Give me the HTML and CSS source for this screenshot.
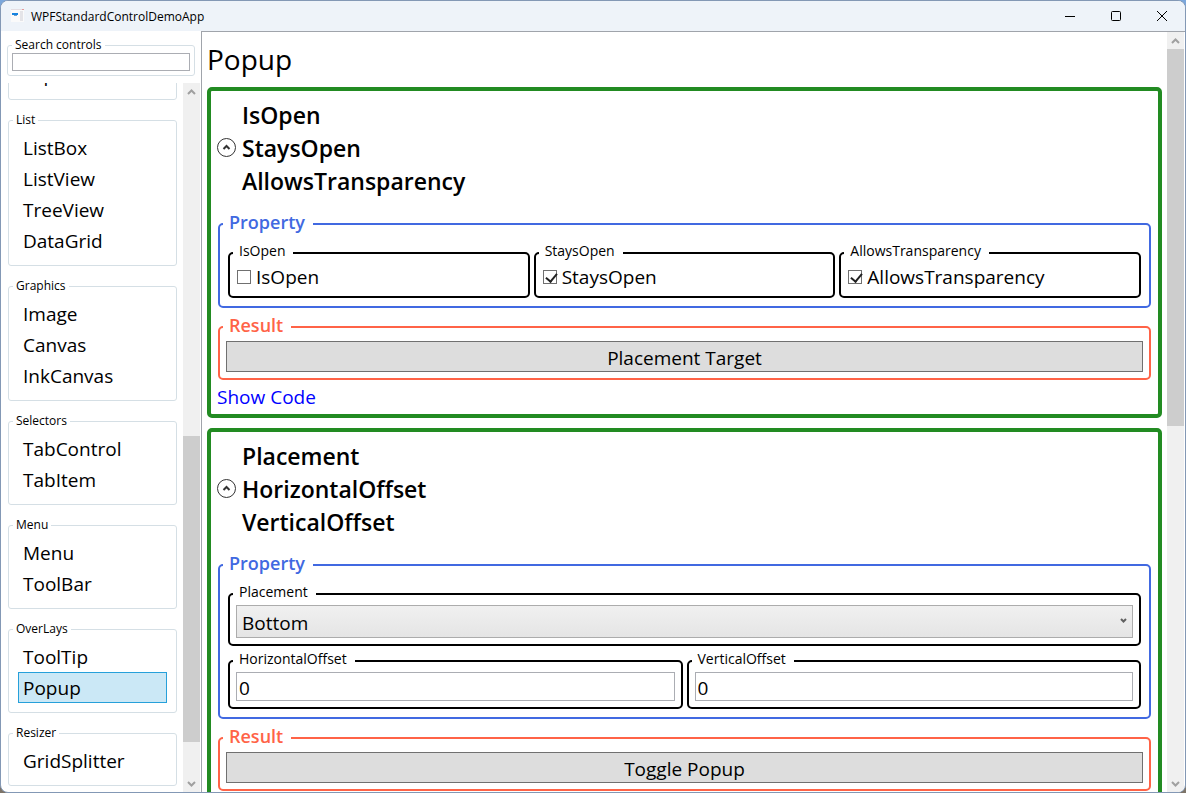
FILE: index.html
```html
<!DOCTYPE html>
<html lang="en">
<head>
  <meta charset="UTF-8">
  <title>WPFStandardControlDemoApp</title>
  <link rel="stylesheet" href="styles.css">
</head>
<body>
  <div class="window">
    <header class="titlebar">
      <svg class="app-icon" width="16" height="16" viewBox="0 0 16 16">
        <rect x="2" y="1" width="13" height="13" fill="#fafafa"/>
        <rect x="2" y="1" width="12" height="1" fill="#e3dde2"/>
        <rect x="13" y="1" width="2" height="1" fill="#e59a9a"/>
        <rect x="11" y="3" width="3" height="10" fill="#e4e4e8"/>
        <rect x="3" y="5" width="6" height="2" fill="#1583e0"/>
        <rect x="5" y="7" width="3" height="1" fill="#6fa0cc"/>
      </svg>
      <span class="app-title">WPFStandardControlDemoApp</span>
      <div class="window-buttons">
        <button type="button" aria-label="Minimize"><svg width="12" height="12" viewBox="0 0 12 12"><path d="M1 6.500h10"/></svg></button>
        <button type="button" aria-label="Maximize"><svg width="12" height="12" viewBox="0 0 12 12"><rect x="1.500" y="1.500" width="9" height="9" rx="1"/></svg></button>
        <button type="button" aria-label="Close"><svg width="12" height="12" viewBox="0 0 12 12"><path d="M1 1l10 10M11 1L1 11"/></svg></button>
      </div>
    </header>

    <div class="columns">
      <aside class="sidebar">
        <fieldset class="group search">
          <legend><label for="search">Search controls</label></legend>
          <input type="text" id="search">
        </fieldset>

        <div class="scroll-area">
          <nav class="control-list">
            <fieldset class="group">
              <ul>
                <li><a href="#">Expander</a></li>
              </ul>
            </fieldset>
            <fieldset class="group">
              <legend>List</legend>
              <ul>
                <li><a href="#">ListBox</a></li>
                <li><a href="#">ListView</a></li>
                <li><a href="#">TreeView</a></li>
                <li><a href="#">DataGrid</a></li>
              </ul>
            </fieldset>
            <fieldset class="group">
              <legend>Graphics</legend>
              <ul>
                <li><a href="#">Image</a></li>
                <li><a href="#">Canvas</a></li>
                <li><a href="#">InkCanvas</a></li>
              </ul>
            </fieldset>
            <fieldset class="group">
              <legend>Selectors</legend>
              <ul>
                <li><a href="#">TabControl</a></li>
                <li><a href="#">TabItem</a></li>
              </ul>
            </fieldset>
            <fieldset class="group">
              <legend>Menu</legend>
              <ul>
                <li><a href="#">Menu</a></li>
                <li><a href="#">ToolBar</a></li>
              </ul>
            </fieldset>
            <fieldset class="group">
              <legend>OverLays</legend>
              <ul>
                <li><a href="#">ToolTip</a></li>
                <li><a href="#" class="selected">Popup</a></li>
              </ul>
            </fieldset>
            <fieldset class="group">
              <legend>Resizer</legend>
              <ul>
                <li><a href="#">GridSplitter</a></li>
              </ul>
            </fieldset>
          </nav>
          <div class="scrollbar scrollbar-list">
            <button type="button" aria-label="Scroll up"><svg width="9" height="6" viewBox="0 0 9 6"><path d="M1 5l3.500-3.500L8 5"/></svg></button>
            <span class="before"></span><span class="thumb"></span><span class="after"></span>
            <button type="button" aria-label="Scroll down"><svg width="9" height="6" viewBox="0 0 9 6"><path d="M1 1l3.500 3.500L8 1"/></svg></button>
          </div>
        </div>
      </aside>

      <main class="page">
        <div class="page-content">
          <h1>Popup</h1>

          <section class="card">
            <div class="card-header">
              <button type="button" class="expander" aria-label="Collapse"><svg width="19" height="19" viewBox="0 0 19 19"><circle cx="9.500" cy="9.500" r="9"/><path d="M6.500 11l3-3 3 3"/></svg></button>
              <h2>IsOpen<br>StaysOpen<br>AllowsTransparency</h2>
            </div>
            <fieldset class="box property">
              <legend>Property</legend>
              <div class="box-body three">
                <fieldset class="box option">
                  <legend>IsOpen</legend>
                  <div class="box-body">
                    <label class="check"><input type="checkbox">IsOpen</label>
                  </div>
                </fieldset>
                <fieldset class="box option">
                  <legend>StaysOpen</legend>
                  <div class="box-body">
                    <label class="check"><input type="checkbox" checked>StaysOpen</label>
                  </div>
                </fieldset>
                <fieldset class="box option">
                  <legend>AllowsTransparency</legend>
                  <div class="box-body">
                    <label class="check"><input type="checkbox" checked>AllowsTransparency</label>
                  </div>
                </fieldset>
              </div>
            </fieldset>
            <fieldset class="box result">
              <legend>Result</legend>
              <div class="box-body">
                <button type="button" class="btn">Placement Target</button>
              </div>
            </fieldset>
            <a href="#" class="show-code">Show Code</a>
          </section>

          <section class="card">
            <div class="card-header">
              <button type="button" class="expander" aria-label="Collapse"><svg width="19" height="19" viewBox="0 0 19 19"><circle cx="9.500" cy="9.500" r="9"/><path d="M6.500 11l3-3 3 3"/></svg></button>
              <h2>Placement<br>HorizontalOffset<br>VerticalOffset</h2>
            </div>
            <fieldset class="box property">
              <legend>Property</legend>
              <div class="box-body two">
                <fieldset class="box option wide">
                  <legend><label for="placement">Placement</label></legend>
                  <div class="box-body combo">
                    <select id="placement">
                      <option>Bottom</option>
                      <option>Top</option>
                      <option>Left</option>
                      <option>Right</option>
                      <option>Center</option>
                    </select>
                    <svg class="combo-arrow" width="7" height="5" viewBox="0 0 7 5"><path d="M1 1l2.500 2.500L6 1"/></svg>
                  </div>
                </fieldset>
                <fieldset class="box option">
                  <legend><label for="horizontal">HorizontalOffset</label></legend>
                  <div class="box-body">
                    <input type="text" id="horizontal" class="textbox" value="0">
                  </div>
                </fieldset>
                <fieldset class="box option">
                  <legend><label for="vertical">VerticalOffset</label></legend>
                  <div class="box-body">
                    <input type="text" id="vertical" class="textbox" value="0">
                  </div>
                </fieldset>
              </div>
            </fieldset>
            <fieldset class="box result">
              <legend>Result</legend>
              <div class="box-body">
                <button type="button" class="btn">Toggle Popup</button>
              </div>
            </fieldset>
          </section>
        </div>
        <div class="scrollbar scrollbar-page">
          <button type="button" aria-label="Scroll up"><svg width="9" height="6" viewBox="0 0 9 6"><path d="M1 5l3.500-3.500L8 5"/></svg></button>
          <span class="thumb"></span><span class="after"></span>
          <button type="button" aria-label="Scroll down"><svg width="9" height="6" viewBox="0 0 9 6"><path d="M1 1l3.500 3.500L8 1"/></svg></button>
        </div>
      </main>
    </div>
  </div>
</body>
</html>
```
FILE: styles.css
```css
* {
  box-sizing: border-box;
}
body {
  margin: 0;
  height: 100vh;
  font-family: "Open Sans", "Noto Sans", sans-serif;
  font-size: 19px;
  color: #000;
  background: linear-gradient(#7ba7dc, #7d8ba0 30%, #7d7468);
  overflow: hidden;
}
button, input, select {
  font: inherit;
  color: inherit;
  margin: 0;
}
svg {
  display: block;
  fill: none;
}
h1, h2, ul, fieldset {
  margin: 0;
  padding: 0;
}
fieldset {
  min-width: 0;
}

/* Window frame */
.window {
  display: flex;
  flex-direction: column;
  height: 100%;
  border: 1px solid #8398b5;
  border-radius: 8px;
  background: #fff;
  overflow: hidden;
}
.titlebar {
  display: flex;
  align-items: center;
  flex: none;
  height: 30px;
  padding-left: 8px;
  background: #eef3f9;
  font-size: 12px;
}
.app-title {
  margin-left: 6px;
}
.window-buttons {
  display: flex;
  align-self: stretch;
  margin-left: auto;
}
.window-buttons button {
  display: flex;
  align-items: center;
  justify-content: center;
  width: 46px;
  padding: 0;
  border: none;
  background: none;
}
.window-buttons svg {
  stroke: #000;
}
.columns {
  display: flex;
  flex: 1;
  min-height: 0;
}

/* List of controls */
.sidebar {
  display: flex;
  flex-direction: column;
  flex: none;
  width: 200px;
  padding-top: 6px;
}
.group {
  border: 1px solid #d5dfe5;
  border-radius: 3px;
  padding: 0 4px;
}
.group legend {
  padding: 0 3px;
  font-size: 12px;
  line-height: 16px;
}
.search {
  margin: 0 6px 7px;
  padding-bottom: 4px;
}
.search input {
  display: block;
  width: 100%;
  height: 18px;
  padding: 0 2px;
  border: 1px solid #abadb3;
  font-size: 12px;
}
.scroll-area {
  display: flex;
  flex: 1;
  min-height: 0;
}
.control-list {
  display: flex;
  flex-direction: column;
  justify-content: flex-end;
  gap: 12px;
  flex: 1;
  padding: 0 6px 6px 7px;
  overflow: hidden;
}
.group ul {
  padding: 4px 5px 9px;
  list-style: none;
}
.group a {
  display: block;
  border: 1px solid transparent;
  padding: 2px 4px 0;
  line-height: 27px;
  color: inherit;
  text-decoration: none;
}
.group a.selected {
  border-color: #26a0da;
  background: #cbe8f6;
}

/* Scrollbars */
.scrollbar {
  display: flex;
  flex-direction: column;
  flex: none;
  width: 17px;
  margin-right: 1px;
  background: #f0f0f0;
}
.scrollbar button {
  display: flex;
  align-items: center;
  justify-content: center;
  flex: none;
  height: 17px;
  padding: 0;
  border: none;
  background: none;
}
.scrollbar svg {
  stroke: #a0a0a0;
  stroke-width: 2;
}
.thumb {
  background: #cdcdcd;
}
.scrollbar-list .before {
  flex: 336;
}
.scrollbar-list .thumb {
  flex: 306;
}
.scrollbar-list .after {
  flex: 33;
}
.scrollbar-page .thumb {
  flex: 377;
}
.scrollbar-page .after {
  flex: 349;
}

/* Page */
.page {
  display: flex;
  flex: 1;
  min-width: 0;
  border: solid #a0a4ab;
  border-width: 1px 0 0 1px;
}
.page-content {
  flex: 1;
  min-width: 0;
  padding: 0 5px;
  overflow: hidden;
}
h1 {
  margin-bottom: 1px;
  font-size: 28px;
  font-weight: 400;
  line-height: 54px;
}
.card {
  margin-bottom: 10px;
  padding: 8px 6px 3px;
  border: 4px solid #228b22;
  border-radius: 5px;
}
.card-header {
  display: flex;
  align-items: center;
  gap: 6px;
  margin-bottom: 13px;
}
.card-header h2 {
  font-size: 23px;
  font-weight: 600;
  line-height: 33px;
}
.expander {
  padding: 0 0 2px;
  border: none;
  background: none;
}
.expander svg {
  stroke: #333;
}
.expander path {
  stroke-width: 2;
}

/* Group boxes inside a card */
.box {
  padding: 0 3px;
  border: 2px solid;
  border-radius: 5px;
}
.property, .result {
  margin: 0 1px 6px;
}
.property > legend, .result > legend {
  padding: 0 8px 3px 6px;
  font-size: 18px;
  font-weight: 600;
  line-height: 23px;
}
.property {
  border-color: #4169e1;
}
.property > legend {
  color: #4169e1;
}
.result {
  border-color: #ff6347;
}
.result > legend {
  color: #ff6347;
}
.property > .box-body {
  display: grid;
  gap: 5px 4px;
  padding: 6px 5px 8px;
}
.property > .three {
  grid-template-columns: repeat(3, 1fr);
}
.property > .two {
  grid-template-columns: repeat(2, 1fr);
}
.wide {
  grid-column: 1 / -1;
}
.option {
  border-color: #000;
}
.option > legend {
  padding: 0 8px 4px 6px;
  font-size: 14px;
  line-height: 16px;
}
.option > .box-body, .result > .box-body {
  padding: 1px 3px 6px;
}

/* Controls */
.check {
  display: flex;
  align-items: center;
  gap: 5px;
  height: 26px;
  padding-left: 1px;
}
.check input {
  appearance: none;
  width: 14px;
  height: 14px;
  border: 1px solid #707070;
  background: #fff;
}
.check input:checked::before {
  content: "";
  display: block;
  width: 5px;
  height: 9px;
  margin: 0 0 0 4px;
  border: solid #212121;
  border-width: 0 2px 2px 0;
  transform: rotate(40deg);
}
.combo {
  position: relative;
}
.combo select {
  appearance: none;
  display: block;
  width: 100%;
  height: 33px;
  padding: 2px 5px 0;
  border: 1px solid #acacac;
  border-radius: 0;
  background: linear-gradient(#f0f0f0, #e5e5e5);
}
.combo-arrow {
  position: absolute;
  top: 14px;
  right: 9px;
  stroke: #606060;
  stroke-width: 2;
  pointer-events: none;
}
.textbox {
  display: block;
  width: 100%;
  height: 29px;
  padding: 2px 2px 0;
  border: 1px solid #abadb3;
}
.btn {
  display: block;
  width: 100%;
  height: 31px;
  padding: 2px 0 0;
  border: 1px solid #707070;
  background: #ddd;
}
.show-code {
  display: block;
  margin-top: -3px;
  line-height: 28px;
  color: #00f;
  text-decoration: none;
}
```
